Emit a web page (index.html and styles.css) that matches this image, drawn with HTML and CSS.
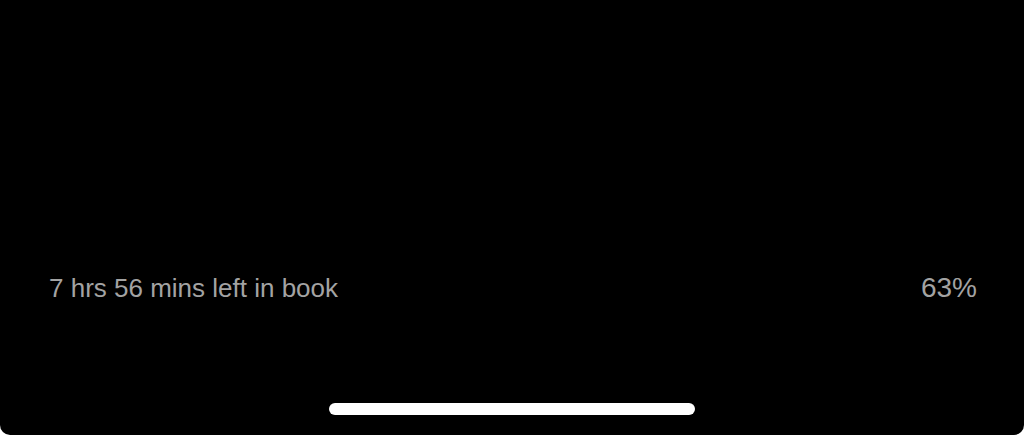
FILE: index.html
```html
<!DOCTYPE html>
<html lang="en">
<head>
  <meta charset="UTF-8" />
  <meta name="viewport" content="width=device-width, initial-scale=1.0"/>
  <title>Reading</title>
  <link rel="stylesheet" href="styles.css">
</head>
<body>
  <main class="reader">
    <footer class="status">
      <span class="time-left">7 hrs 56 mins left in book</span>
      <span class="percent">63%</span>
    </footer>
    <div class="home-bar"></div>
  </main>
</body>
</html>
```

FILE: styles.css
```css
body {
  margin: 0;
  background: #fff;
  font-family: "Liberation Sans", Arial, sans-serif;
  color: #a3a3a3;
}
.reader {
  display: flex;
  flex-direction: column;
  justify-content: flex-end;
  align-items: center;
  min-height: 100vh;
  padding-bottom: 20px;
  box-sizing: border-box;
  background: #000;
  border-radius: 0 0 10px 10px;
}
.status {
  display: flex;
  justify-content: space-between;
  align-items: baseline;
  width: 100%;
  padding: 0 47px 0 49px;
  margin-bottom: 99px;
  box-sizing: border-box;
  font-size: 26px;
  line-height: 32px;
}
.percent {
  font-size: 28px;
}
.home-bar {
  width: 366px;
  max-width: 100%;
  height: 12px;
  border-radius: 6px;
  background: #fff;
}
```
